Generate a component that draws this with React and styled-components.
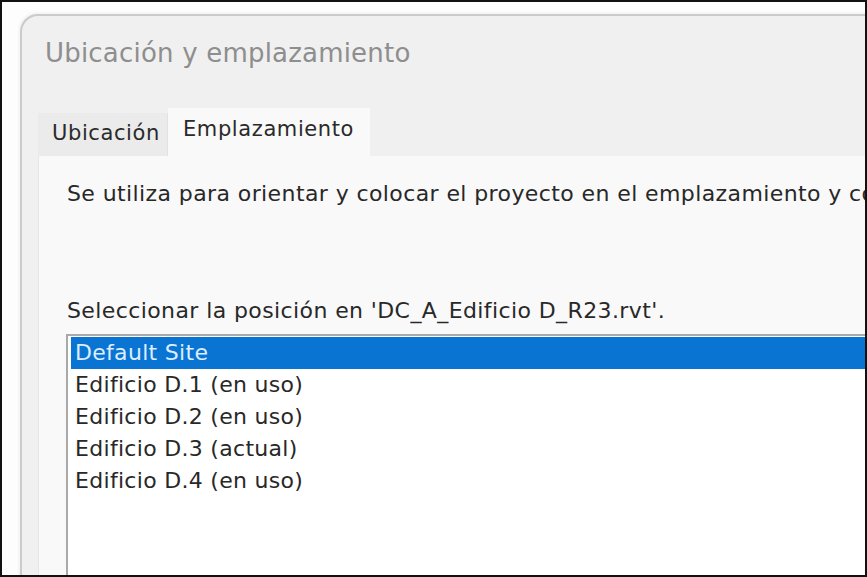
import React from "react";
import styled, { createGlobalStyle } from "styled-components";

const GlobalStyle = createGlobalStyle`
  html, body {
    margin: 0;
    padding: 0;
    background: #ffffff;
  }
`;

const Frame = styled.div`
  box-sizing: border-box;
  width: 867px;
  height: 577px;
  border: 2px solid #111;
  background: #fdfdfd;
  overflow: hidden;
  padding: 12px 0 0 18px;
  font-family: "DejaVu Sans", "Noto Sans", sans-serif;
`;

const Dialog = styled.div`
  box-sizing: border-box;
  width: 900px;
  height: 620px;
  background: #f0f0f0;
  border: 2px solid #cbcbcb;
  border-right: none;
  border-bottom: none;
  border-top-left-radius: 18px;
  display: flex;
  flex-direction: column;
  box-shadow: -1px -1px 3px rgba(0, 0, 0, 0.06);
`;

const Title = styled.div`
  color: #8e8e8e;
  font-size: 26px;
  letter-spacing: 0.2px;
  line-height: 34px;
  padding: 20px 0 0 23px;
  height: 70px;
  box-sizing: border-box;
  white-space: nowrap;
`;

const TabStrip = styled.div`
  display: flex;
  align-items: flex-end;
  margin-top: 22px;
  padding-left: 16px;
  height: 48px;
`;

const Tab = styled.div`
  box-sizing: border-box;
  height: ${(p) => (p.$active ? "48px" : "43px")};
  width: ${(p) => p.$width}px;
  background: ${(p) => (p.$active ? "#f9f9f9" : "#ebebeb")};
  color: #2a2a2a;
  font-size: 21px;
  letter-spacing: 0.6px;
  padding-left: ${(p) => (p.$active ? 15 : 14)}px;
  padding-top: ${(p) => (p.$active ? 6 : 5)}px;
  line-height: 30px;
  white-space: nowrap;
  border-right: ${(p) => (p.$active ? "none" : "1px solid #e2e2e2")};
`;

const Panel = styled.div`
  flex: 1;
  margin-left: 16px;
  background: #f9f9f9;
  border-left: 1px solid #e6e6e6;
  padding: 23px 0 0 28px;
  display: flex;
  flex-direction: column;
`;

const Text = styled.div`
  color: #282828;
  font-size: 22px;
  letter-spacing: 0.4px;
  line-height: 30px;
  white-space: nowrap;
`;

const ListLabel = styled(Text)`
  margin-top: 87px;
`;

const ListBox = styled.div`
  margin-top: 8px;
  margin-left: -1px;
  flex: 1;
  background: #ffffff;
  border: 2px solid #a9a9a9;
  border-right: none;
  border-bottom: none;
  padding: 1px 0 0 3px;
`;

const Row = styled.div`
  height: 32px;
  line-height: 31px;
  font-size: 22px;
  letter-spacing: 0.3px;
  padding-left: 4px;
  white-space: nowrap;
  color: ${(p) => (p.$selected ? "#dceeff" : "#282828")};
  background: ${(p) => (p.$selected ? "#0a74d2" : "transparent")};
`;

const sites = [
  "Default Site",
  "Edificio D.1 (en uso)",
  "Edificio D.2 (en uso)",
  "Edificio D.3 (actual)",
  "Edificio D.4 (en uso)",
];

export default function App() {
  return (
    <>
      <GlobalStyle />
      <Frame>
        <Dialog>
          <Title>Ubicación y emplazamiento</Title>
          <TabStrip>
            <Tab $width={130}>Ubicación</Tab>
            <Tab $active $width={202}>Emplazamiento</Tab>
          </TabStrip>
          <Panel>
            <Text>
              Se utiliza para orientar y colocar el proyecto en el emplazamiento y con respecto a otros proyectos.
            </Text>
            <ListLabel>Seleccionar la posición en 'DC_A_Edificio D_R23.rvt'.</ListLabel>
            <ListBox>
              {sites.map((s, i) => (
                <Row key={s} $selected={i === 0}>
                  {s}
                </Row>
              ))}
            </ListBox>
          </Panel>
        </Dialog>
      </Frame>
    </>
  );
}
